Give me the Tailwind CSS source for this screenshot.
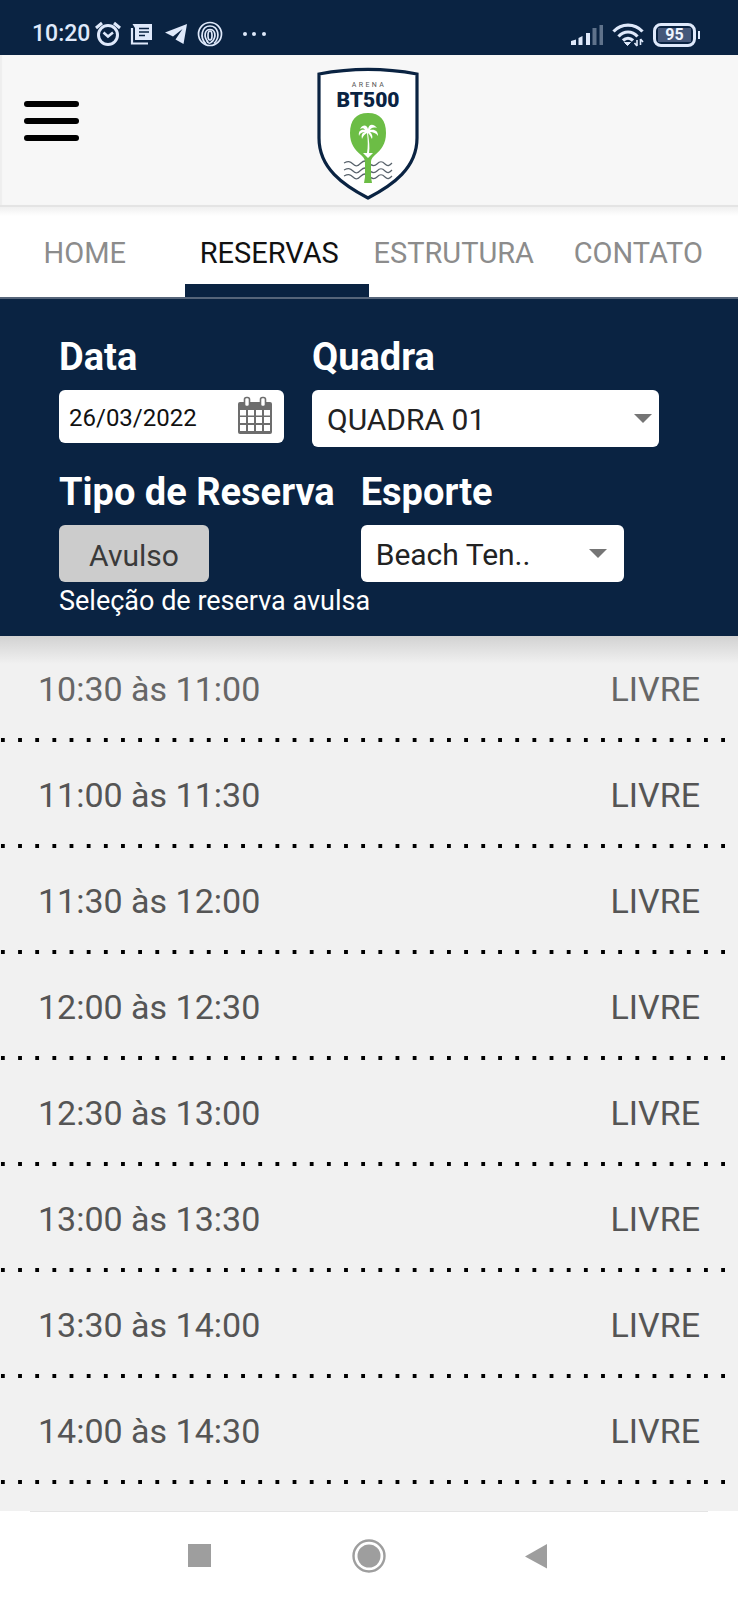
<!DOCTYPE html>
<html lang="pt-BR">
<head>
<meta charset="utf-8">
<meta name="viewport" content="width=device-width, initial-scale=1">
<title>Arena BT500 - Reservas</title>
<script src="https://cdn.jsdelivr.net/npm/@tailwindcss/browser@4"></script>
</head>
<body class="flex min-h-screen flex-col bg-white font-['Roboto',sans-serif]">

<!-- Status bar -->
<div class="flex items-end justify-between bg-[#0a2342] pt-[17px] pr-[38px] pb-1 pl-8 text-[#dfe9fb]">
  <div class="flex items-center">
    <span class="text-[23px]/[34px] font-medium">10:20</span>
    <svg class="ml-1 size-7" viewBox="0 0 28 28" fill="none" stroke="currentColor" stroke-width="3" aria-hidden="true">
      <circle cx="14" cy="15" r="9.5"/><path d="M9.500 12.500l4.500 4 5-4" stroke-width="2.500"/><path d="M2 8l6-5M26 8l-6-5"/>
    </svg>
    <svg class="ml-2 size-6" viewBox="0 0 24 24" aria-hidden="true">
      <path d="M2 6v15.500h16" fill="none" stroke="currentColor" stroke-width="2.200"/>
      <path d="M2.500 2H22v16H5V6z" fill="currentColor"/>
      <path d="M9 6.500h10M9 10h10M9 13.500h6" stroke="#0a2342" stroke-width="1.600"/>
    </svg>
    <svg class="ml-2.5 size-6" viewBox="0 0 24 24" fill="currentColor" aria-hidden="true">
      <path d="M1 10.500L23 2l-3.500 20-8-4.500 7-10.500-9.500 7.500z"/>
    </svg>
    <svg class="ml-2 size-7" viewBox="0 0 28 28" fill="none" stroke="currentColor" stroke-width="1.700" aria-hidden="true">
      <circle cx="14" cy="14" r="11.500"/><path d="M10 24C3 17 6 6 14 6s11 11 4 17.500"/><path d="M12 22c-5-6-3-12.500 2-12.500S21 16 16 22"/><ellipse cx="14" cy="15.500" rx="2" ry="4.500"/><path d="M11 21c1 3 4 3 5 0"/>
    </svg>
    <svg class="ml-4 h-6 w-7" viewBox="0 0 28 24" fill="currentColor" aria-hidden="true">
      <circle cx="5" cy="12" r="2"/><circle cx="14" cy="12" r="2"/><circle cx="24" cy="12" r="2"/>
    </svg>
  </div>
  <div class="flex items-center gap-[9px] pb-1">
    <svg class="h-6 w-8" viewBox="0 0 32 24" fill="currentColor" aria-hidden="true">
      <path d="M0 18l5-1.500v5.500H0zM7.500 15l4-2v9h-4zM15 12l4-2v12h-4z"/><path d="M15 10h4v12h-4z"/><path d="M21.500 5h4v17h-4zM28.500 2h4v20h-4z" opacity=".4"/>
    </svg>
    <svg class="h-6 w-8" viewBox="0 0 32 24" fill="none" stroke="currentColor" stroke-width="3.200" aria-hidden="true">
      <path d="M1.500 8.500c8-8.500 21-8.500 29 0M6.500 13.500c5.500-6 13.500-6 19 0M11 17.500c3-3 7-3 10 0"/><path d="M12.500 19.500h6l-3 3z" fill="currentColor" stroke-width="1"/><path d="M25 17v6M28.500 16v6M22.500 20l2.500 3M31 19l-2.500 -3" stroke-width="1.600"/>
    </svg>
    <div class="flex items-center">
      <div class="flex h-6 w-[43px] items-center justify-center rounded-lg border-3 border-current p-0.5">
        <span class="w-full bg-[#46587a] text-center text-base/[14px] font-bold text-[#f0f5ff]">95</span>
      </div>
      <div class="ml-0.5 h-2 w-0.5 bg-current"></div>
    </div>
  </div>
</div>

<!-- Header -->
<header class="grid h-[152px] grid-cols-[1fr_auto_1fr] items-start border-b-2 border-[#e4e4e4] bg-[#f7f7f7] shadow-[inset_2px_0_1px_#eeeeee]">
  <button type="button" aria-label="Menu" class="mt-[45px] ml-6 flex w-[55px] flex-col gap-[11px] pt-px">
    <span class="h-1.5 rounded-full bg-black"></span>
    <span class="h-1.5 rounded-full bg-black"></span>
    <span class="h-1.5 rounded-full bg-black"></span>
  </button>
  <a href="#" aria-label="Arena BT500">
    <svg class="h-[150px] w-[140px]" viewBox="0 0 140 150">
      <path d="M20 19C52 13 86 13 118 19v64c0 30-24 47-49 60C44 130 20 113 20 83z" fill="#fff" stroke="#0a2342" stroke-width="3.200"/>
      <text x="70" y="32" text-anchor="middle" class="fill-[#555] font-['Roboto',sans-serif] text-[7px] tracking-[0.35em]">ARENA</text>
      <text x="69" y="52" text-anchor="middle" class="fill-[#0a2342] font-['Roboto',sans-serif] text-[21px] font-black">BT500</text>
      <g fill="none" stroke="#59636c" stroke-width="1.200">
        <path d="M45 108c4-2 6-2 9 1s5 2 8-1 6-2 8 0 5 4 8 1 5-3 8 0 5 1 7-1"/>
        <path d="M45 115c4-2 6-2 9 1s5 2 8-1 6-2 8 0 5 4 8 1 5-3 8 0 5 1 7-1"/>
        <path d="M45 121c4-2 6-2 9 1s5 2 8-1 6-2 8 0 5 4 8 1 5-3 8 0 5 1 7-1"/>
      </g>
      <path d="M69 58c12 0 18 7 18 20 0 11-5 17-11 22-3 3-4 4-4 8v14l1 6h-8l1-6v-14c0-4-1-5-4-8-6-5-11-11-11-22 0-13 6-20 18-20z" fill="#6cbd45"/>
      <path d="M69 74c1-5 5-6 9-1-4-1-6 0-7 2 5-1 8 1 8 6-2-3-5-4-8-4 2 2 3 4 2 7-2-4-3-5-4-6 1 8 2 14 1 20h4l-5 5-5-5h4c1-6 1-12 0-20-2 1-4 3-5 6-1-4 0-6 3-7-3 0-5 1-6 4-1-5 2-7 6-6-1-2-3-2-5-1 3-5 7-4 8 0z" fill="#fff"/>
    </svg>
  </a>
</header>

<!-- Tabs -->
<nav class="grid h-[92px] grid-cols-4 border-b-2 border-[#56657a] bg-linear-to-b from-[#f0f0f0] to-white to-10% text-[29px]/8 text-[#8c8c8c]">
  <a href="#" class="flex items-center justify-center border-b-13 border-transparent pt-3.5 pr-[15px]">HOME</a>
  <a href="#" aria-current="page" class="flex items-center justify-center border-b-13 border-[#0a2342] pt-3.5 pr-[15px] text-[#111]">RESERVAS</a>
  <a href="#" class="flex items-center justify-center border-b-13 border-transparent pt-3.5 pr-[15px]">ESTRUTURA</a>
  <a href="#" class="flex items-center justify-center border-b-13 border-transparent pt-3.5 pr-[15px]">CONTATO</a>
</nav>

<!-- Filters -->
<form class="bg-[#0a2342] px-[59px] pt-9 pb-5 text-white">
  <div class="flex items-start gap-7">
    <div class="flex flex-col gap-[11px]">
      <label for="data" class="text-[38px]/[44px] font-bold">Data</label>
      <div class="flex h-[53px] w-[225px] items-center rounded-md bg-white pr-3 pl-2.5">
        <input id="data" type="text" value="26/03/2022" class="min-w-0 flex-1 pt-0.5 text-2xl/8 text-[#111] outline-none">
        <button type="button" aria-label="Abrir calendário" class="mb-1">
          <svg class="h-[38px] w-[34px]" viewBox="0 0 34 38">
            <rect y="6" width="34" height="32" rx="2" fill="#6d6d6d"/>
            <path d="M2 14h6v5.500H2zM10 14h6v5.500h-6zM18 14h6v5.500h-6zM26 14h6v5.500h-6zM2 21h6v6H2zM10 21h6v6h-6zM18 21h6v6h-6zM26 21h6v6h-6zM2 29h6v6H2zM10 29h6v6h-6zM18 29h6v6h-6zM26 29h6v6h-6z" fill="#fff"/>
            <rect x="6.500" y="1.500" width="5" height="9" rx="2" fill="#fff" stroke="#6d6d6d" stroke-width="1.600"/>
            <rect x="22.500" y="1.500" width="5" height="9" rx="2" fill="#fff" stroke="#6d6d6d" stroke-width="1.600"/>
          </svg>
        </button>
      </div>
    </div>
    <div class="flex max-w-[347px] flex-1 flex-col gap-[11px]">
      <label for="quadra" class="text-[38px]/[44px] font-bold">Quadra</label>
      <div class="grid items-center">
        <select id="quadra" class="col-start-1 row-start-1 h-[57px] w-full appearance-none rounded-md bg-white pt-0.5 pr-10 pl-[15px] text-[30px]/9 text-[#222]"><option>QUADRA 01</option></select>
        <svg class="pointer-events-none col-start-1 row-start-1 mr-[7px] h-[9px] w-[18px] justify-self-end" viewBox="0 0 18 9" aria-hidden="true"><path d="M0 0h18L9 9z" fill="#757575"/></svg>
      </div>
    </div>
  </div>
  <div class="mt-[23px] flex items-start gap-[26px]">
    <div class="flex flex-col items-start gap-[11px]">
      <label for="tipo" class="text-[38px]/[44px] font-bold">Tipo de Reserva</label>
      <button id="tipo" type="button" class="h-[57px] w-[150px] rounded-md bg-[#cccccc] pt-1 text-[30px]/9 text-[#3a3a3a]">Avulso</button>
    </div>
    <div class="flex max-w-[263px] flex-1 flex-col gap-[11px]">
      <label for="esporte" class="text-[38px]/[44px] font-bold">Esporte</label>
      <div class="grid items-center">
        <select id="esporte" class="col-start-1 row-start-1 h-[57px] w-full appearance-none rounded-md bg-white pt-0.5 pr-10 pl-[15px] text-[30px]/9 text-[#222]"><option>Beach Ten..</option></select>
        <svg class="pointer-events-none col-start-1 row-start-1 mr-[17px] h-[9px] w-[18px] justify-self-end" viewBox="0 0 18 9" aria-hidden="true"><path d="M0 0h18L9 9z" fill="#757575"/></svg>
      </div>
    </div>
  </div>
  <p class="mt-1 text-[27px]/[30px]">Seleção de reserva avulsa</p>
</form>

<!-- Time slots -->
<main class="flex-1 bg-[#f1f1f1] bg-linear-to-b from-[#d2d2d2] to-[#f1f1f1] to-[28px] pb-[26px]">
  <table class="w-full text-[34px]/10 text-[#555]">
    <tbody id="slots"></tbody>
  </table>
</main>

<!-- System navigation -->
<div class="px-[30px]"><div class="h-px bg-[#e4e4e4]"></div></div>
<div class="flex h-[88px] justify-center text-[#9e9e9e]">
  <button type="button" aria-label="Recentes" class="flex w-[169px] items-center justify-center"><svg class="size-9" viewBox="0 0 36 36" fill="currentColor"><path d="M6 6h23v23H6z"/></svg></button>
  <button type="button" aria-label="Início" class="flex w-[169px] items-center justify-center"><svg class="size-9" viewBox="0 0 36 36" fill="currentColor"><circle cx="18" cy="18" r="11.500"/><circle cx="18" cy="18" r="15.500" fill="none" stroke="currentColor" stroke-width="2.400"/></svg></button>
  <button type="button" aria-label="Voltar" class="flex w-[169px] items-center justify-center"><svg class="size-9" viewBox="0 0 36 36" fill="currentColor"><path d="M27 6v24.500L5 18.500z"/></svg></button>
</div>

<script>
  const times = ["10:30", "11:00", "11:30", "12:00", "12:30", "13:00", "13:30", "14:00", "14:30"];
  document.getElementById("slots").innerHTML = times.slice(0, -1).map((start, i) => `
    <tr class="h-[106px] bg-[linear-gradient(to_right,transparent_1px,black_1px,black_5px,transparent_5px)] bg-[length:17px_4px] bg-bottom-left [background-repeat:round_no-repeat] first:text-[#666]">
      <td class="pl-[38px]">${start} às ${times[i + 1]}</td>
      <td class="pr-[38px] text-right">LIVRE</td>
    </tr>`).join("");
</script>
</body>
</html>
